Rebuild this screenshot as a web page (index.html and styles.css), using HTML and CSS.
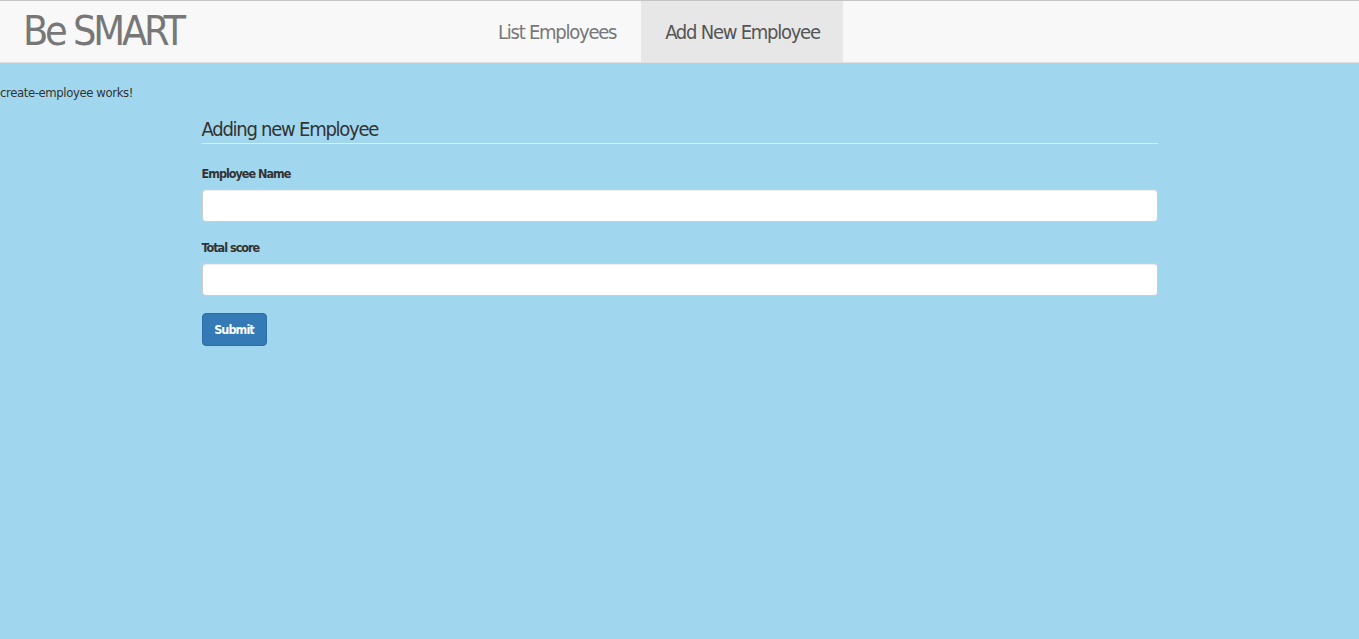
FILE: index.html
```html
<!DOCTYPE html>
<html>
<head>
<meta charset="utf-8">
<link rel="stylesheet" href="styles.css">
</head>
<body>
<nav class="navbar">
  <a class="brand" href="#">Be SMART</a>
  <ul class="nav">
    <li><a href="#">List Employees</a></li>
    <li class="active"><a href="#">Add New Employee</a></li>
  </ul>
</nav>
<p class="works">create-employee works!</p>
<div class="container">
  <h3 class="title">Adding new Employee</h3>
  <form class="form">
    <div class="group">
      <label>Employee Name</label>
      <input type="text" class="control">
    </div>
    <div class="group">
      <label>Total score</label>
      <input type="text" class="control">
    </div>
    <button type="button" class="btn">Submit</button>
  </form>
</div>
</body>
</html>
```
FILE: styles.css
```css
* { box-sizing: border-box; }
html, body { margin: 0; padding: 0; }
body {
  background: #a1d7ee;
  font-family: "Liberation Sans Narrow", "DejaVu Sans Condensed", "DejaVu Sans", sans-serif;
  font-stretch: condensed;
  font-size: 13px;
  letter-spacing: -0.4px;
  line-height: 20px;
  color: #333;
  min-height: 639px;
}
.navbar {
  display: flex;
  align-items: stretch;
  height: 63px;
  background: #f8f8f8;
  border-top: 1px solid #c4c4c4;
  border-bottom: 1px solid #e0e0e0;
}
.brand {
  display: flex;
  align-items: center;
  padding: 0 0 2px 23px;
  width: 474px;
  font-size: 41px;
  letter-spacing: -3.2px;
  color: #777;
  text-decoration: none;
}
.nav {
  display: flex;
  list-style: none;
  margin: 0;
  padding: 0;
}
.nav li a {
  display: flex;
  align-items: center;
  height: 61px;
  padding: 0 25px 0 24px;
  font-size: 20px;
  letter-spacing: -1.25px;
  color: #777;
  text-decoration: none;
}
.nav li.active a {
  background: #e7e7e7;
  color: #555;
  padding: 0 23px 0 24px;
}
.works {
  margin: 20px 0 0 0;
  line-height: 20px;
}
.container {
  width: 956px;
  margin: 0 auto;
}
.title {
  margin: 14px 0 0 0;
  font-size: 20px;
  letter-spacing: -1.25px;
  font-weight: normal;
  line-height: 24px;
  padding-bottom: 2px;
  border-bottom: 1px solid #d8eef8;
  color: #333;
}
.form { margin-top: 20px; }
.group { margin-bottom: 16px; }
label {
  display: block;
  font-weight: bold;
  font-size: 12.5px;
  letter-spacing: -1px;
  margin-bottom: 5px;
}
.control {
  display: block;
  width: 100%;
  height: 33px;
  border: 1px solid #ccc;
  border-radius: 4px;
  background: #fff;
  box-shadow: inset 0 1px 1px rgba(0,0,0,.075);
}
.btn {
  font-family: inherit;
  font-stretch: condensed;
  font-weight: bold;
  font-size: 12.5px;
  letter-spacing: -0.9px;
  color: #fff;
  background: #337ab7;
  border: 1px solid #2e6da4;
  border-radius: 4px;
  width: 65px;
  height: 33px;
  padding: 0;
  margin: 1px 0 0 0;
}
```
